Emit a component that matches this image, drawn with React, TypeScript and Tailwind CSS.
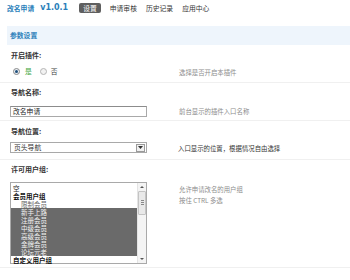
const cjk = '"Noto Sans CJK SC", "DejaVu Sans", sans-serif';

function Tab({ label, active }: { label: string; active?: boolean }) {
  return active ? (
    <span className="rounded-[2px] bg-[#5f5f5f] px-[4px] leading-[10px] text-white">{label}</span>
  ) : (
    <span className="leading-[10px] text-[#333]">{label}</span>
  );
}

function Label({ children }: { children: React.ReactNode }) {
  return <div className="h-[10px] pl-[11px] text-[7px] font-bold leading-[10px] text-[#333]">{children}</div>;
}

const groups = [
  { name: "空", kind: "plain" },
  { name: "会员用户组", kind: "group" },
  { name: "限制会员", kind: "child" },
  { name: "新手上路", kind: "sel" },
  { name: "注册会员", kind: "sel" },
  { name: "中级会员", kind: "sel" },
  { name: "高级会员", kind: "sel" },
  { name: "金牌会员", kind: "sel" },
  { name: "论坛元老", kind: "sel" },
  { name: "自定义用户组", kind: "group" },
];

export default function App() {
  return (
    <div className="h-[280px] w-[350px] overflow-hidden bg-white" style={{ fontFamily: cjk }}>
      {/* top nav */}
      <div className="flex h-[26px] items-start pl-[7px] pt-[3px]">
        <div className="flex items-center font-bold text-[#2b7fba]">
          <span className="text-[6.8px] leading-[10px]">改名申请</span>
          <span className="ml-[6px] text-[8px] leading-[10px]" style={{ fontFamily: '"DejaVu Sans", sans-serif' }}>
            v1.0.1
          </span>
        </div>
        <div className="ml-[11px] flex items-center gap-[9px] text-[6.8px]">
          <Tab label="设置" active />
          <Tab label="申请审核" />
          <Tab label="历史记录" />
          <Tab label="应用中心" />
        </div>
      </div>

      {/* section header */}
      <div className="ml-[7px] flex h-[19px] items-center bg-[#eef5fc] pl-[3px] text-[6.8px] font-bold text-[#2b7fba]">
        参数设置
      </div>

      {/* enable */}
      <div className="border-b border-[#f0f0f0] pb-[6px] pt-[5px]">
        <Label>开启插件:</Label>
        <div className="mt-[6px] flex h-[10px] items-center">
          <div className="flex w-[179px] items-center pl-[13px] text-[6.8px]">
            <span className="flex h-[7px] w-[7px] items-center justify-center rounded-full border border-[#8a8a8a] bg-[#e8eef4]">
              <span className="h-[3px] w-[3px] rounded-full bg-[#1f4f7a]" />
            </span>
            <span className="ml-[5px] text-[#3aa53a]">是</span>
            <span className="ml-[8px] h-[7px] w-[7px] rounded-full border border-[#b5b5b5] bg-[#f2f2f2]" />
            <span className="ml-[4px] text-[#444]">否</span>
          </div>
          <div className="mt-[4px] text-[6.4px] text-[#8c8c8c]">选择是否开启本插件</div>
        </div>
      </div>

      {/* nav name */}
      <div className="border-b border-[#f0f0f0] pb-[3px] pt-[4px]">
        <Label>导航名称:</Label>
        <div className="mt-[9px] flex items-start">
          <div className="ml-[10px] flex h-[11px] w-[137px] items-center border border-[#a9a9a9] border-t-[#8c8c8c] pl-[2px] text-[6.8px] text-[#222]">
            改名申请
          </div>
          <div className="ml-[32px] mt-[1px] text-[6.4px] text-[#8c8c8c]">前台显示的插件入口名称</div>
        </div>
      </div>

      {/* nav position */}
      <div className="border-b border-[#f0f0f0] pb-[5px] pt-[5px]">
        <Label>导航位置:</Label>
        <div className="mt-[6px] flex items-start">
          <div className="ml-[10px] flex h-[11px] w-[137px] items-center border border-[#a9a9a9] pl-[3px] text-[6.8px] text-[#333]">
            <span className="flex-1">页头导航</span>
            <span className="mr-[1px] flex h-[8px] w-[9px] items-center justify-center border border-[#9a9a9a] bg-[#f0f0f0]">
              <svg width="5" height="3" viewBox="0 0 5 3">
                <path d="M0 0h5L2.5 3z" fill="#333" />
              </svg>
            </span>
          </div>
          <div className="ml-[31px] mt-[2px] text-[6.4px] text-[#333]">入口显示的位置，根据情况自由选择</div>
        </div>
      </div>

      {/* user groups */}
      <div className="border-b border-[#f0f0f0] pb-[3px] pt-[4px]">
        <Label>许可用户组:</Label>
        <div className="mt-[8px] flex items-start">
          <div className="ml-[10px] flex h-[82px] w-[137px] border border-[#a9a9a9] bg-white">
            <div className="flex-1 pt-[1px] text-[6.5px]">
              {groups.map((g) => (
                <div
                  key={g.name}
                  className={
                    g.kind === "sel"
                      ? "h-[8px] overflow-hidden bg-[#6a6a6a] pl-[10px] leading-[8px] text-[#f2f2f2]"
                      : g.kind === "group"
                        ? "h-[8px] overflow-hidden pl-[2px] font-bold leading-[8px] text-[#111]"
                        : g.kind === "child"
                          ? "h-[8px] overflow-hidden pl-[10px] leading-[8px] text-[#666]"
                          : "h-[8px] overflow-hidden pl-[2px] leading-[8px] text-[#222]"
                  }
                >
                  {g.name}
                </div>
              ))}
            </div>
            <div className="flex w-[9px] flex-col border-l border-[#e4e4e4] bg-[#f4f4f4]">
              <div className="flex h-[8px] items-center justify-center">
                <svg width="4" height="2" viewBox="0 0 4 2">
                  <path d="M0 2h4L2 0z" fill="#555" />
                </svg>
              </div>
              <div className="flex h-[24px] items-center justify-center rounded-[1px] border border-[#c4c4c4] bg-[#e9e9e9]">
                <div className="flex flex-col gap-[1px]">
                  <span className="h-px w-[3px] bg-[#888]" />
                  <span className="h-px w-[3px] bg-[#888]" />
                  <span className="h-px w-[3px] bg-[#888]" />
                </div>
              </div>
              <div className="flex-1" />
              <div className="flex h-[8px] items-center justify-center">
                <svg width="4" height="2" viewBox="0 0 4 2">
                  <path d="M0 0h4L2 2z" fill="#555" />
                </svg>
              </div>
            </div>
          </div>
          <div className="ml-[32px] mt-[2px] text-[6.4px] leading-[11px] text-[#8c8c8c]">
            <div>允许申请改名的用户组</div>
            <div>按住 CTRL 多选</div>
          </div>
        </div>
      </div>

      {/* submit */}
      <div className="pl-[11px] pt-[3px]">
        <button className="h-[10px] border border-[#999] bg-[#e4e4e4] px-[3px] text-[6.8px] font-bold leading-[8px] text-[#333]">
          提交
        </button>
      </div>
    </div>
  );
}
